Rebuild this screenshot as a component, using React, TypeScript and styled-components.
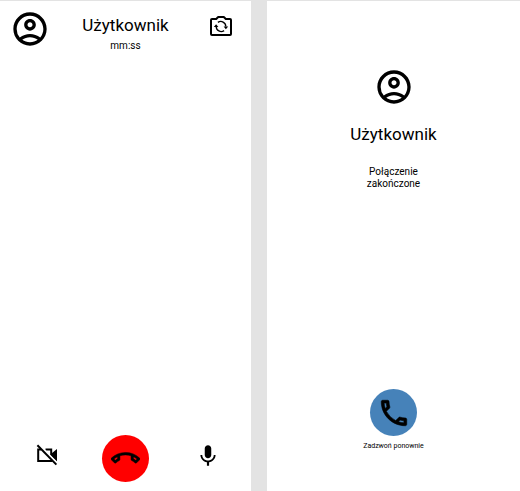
import React from "react";
import styled, { createGlobalStyle } from "styled-components";
import { MdOutlineAccountCircle, MdOutlineCallEnd, MdOutlineCall } from "react-icons/md";

const GlobalStyle = createGlobalStyle`
  *, *::before, *::after { box-sizing: border-box; }
  body {
    margin: 0;
    background: #e3e3e3;
    color: #000;
    font-family: Roboto, "Liberation Sans", sans-serif;
  }
`;

const Board = styled.main`
  display: grid;
  grid-template-columns: 251fr 253fr;
  gap: 16px;
  min-height: 100vh;
  padding-top: 1px;
`;

const Screen = styled.section`
  display: flex;
  flex-direction: column;
  background: #fff;
`;

const CallHeader = styled.header`
  display: grid;
  grid-template-columns: 1fr auto 1fr;
  align-items: start;
  padding: 8px 10px 0;
`;

const Avatar = styled.span`
  display: flex;
`;

const Caller = styled.div`
  padding-top: 4px;
  text-align: center;
`;

const Name = styled.h1`
  margin: 0;
  font-size: 17px;
  line-height: 24px;
  font-weight: 400;
`;

const Note = styled.p<{ $size?: number }>`
  margin: 0;
  font-size: ${({ $size = 10 }) => $size}px;
  line-height: 12px;
  text-align: center;
`;

const CallerNote = styled(Note)`
  margin-top: 3px;
`;

const IconButton = styled.button`
  display: flex;
  padding: 0;
  border: 0;
  background: none;
  color: inherit;
  cursor: pointer;
`;

const FlipButton = styled(IconButton)`
  justify-self: end;
  margin: 4px 8px 0 0;
`;

const RoundButton = styled(IconButton)<{ $color: string }>`
  align-items: center;
  justify-content: center;
  width: 47px;
  height: 47px;
  border-radius: 50%;
  background: ${({ $color }) => $color};

  path:not([fill="none"]) {
    stroke: currentColor;
    stroke-width: 0.4px;
  }
`;

const Controls = styled.footer`
  display: grid;
  grid-template-columns: 1fr auto 1fr;
  align-items: start;
  justify-items: center;
  margin-top: auto;
  padding-bottom: 9px;
`;

const ControlSlot = styled.div<{ $side: "left" | "right" }>`
  padding: ${({ $side }) => ($side === "left" ? "8px 9px 0 0" : "8px 0 0 16px")};
`;

const EndedBody = styled.div`
  display: flex;
  flex-direction: column;
  align-items: center;
  padding-top: 66px;
`;

const EndedName = styled(Name)`
  margin-top: 15px;
`;

const EndedNote = styled(Note)`
  width: 64px;
  margin-top: 20px;
`;

const Redial = styled.div`
  display: flex;
  flex-direction: column;
  align-items: center;
  gap: 4px;
  margin-top: auto;
  padding-bottom: 39px;
`;

function FlipCameraIcon() {
  return (
    <svg width="24" height="26" viewBox="0 0 24 26" fill="none" stroke="currentColor" aria-hidden="true">
      <path
        d="M3 6H7.2L9.2 4H14.8L16.8 6H21Q22 6 22 7V21Q22 22 21 22H3Q2 22 2 21V7Q2 6 3 6Z"
        strokeWidth="2"
        strokeLinejoin="round"
      />
      <path d="M8.9 9.4A5 5 0 0 1 16.8 13.5M15.1 17.6A5 5 0 0 1 7.2 13.5" strokeWidth="1.4" />
      <path d="M4.8 14H9.4L7.1 11.2ZM14.6 13.4H19.2L16.9 16.2Z" fill="currentColor" stroke="none" />
    </svg>
  );
}

function CameraOffIcon() {
  return (
    <svg width="24" height="24" viewBox="0 0 24 24" fill="none" stroke="currentColor" aria-hidden="true">
      <path d="M6 6.5H3.2V18H17.5M10.5 6.5H16.2V12" strokeWidth="2" />
      <path d="M15.5 11.2L22 6V18.5L15.5 12.5Z" fill="currentColor" stroke="none" />
      <path d="M3.8 1.2L23 20.8" stroke="#fff" strokeWidth="1.6" />
      <path d="M2.4 2.2L21.4 21.6" strokeWidth="2" />
    </svg>
  );
}

function MicIcon() {
  return (
    <svg width="26" height="26" viewBox="0 0 24 24" fill="currentColor" aria-hidden="true">
      <path d="M12 14c1.66 0 3-1.34 3-3V5c0-1.66-1.34-3-3-3S9 3.34 9 5v6c0 1.66 1.34 3 3 3zM17.3 11c0 3-2.54 5.1-5.3 5.1S6.7 14 6.7 11H5c0 3.41 2.72 6.23 6 6.72V21h2v-3.28c3.28-.48 6-3.3 6-6.72h-1.7z" />
    </svg>
  );
}

export default function App() {
  return (
    <>
      <GlobalStyle />
      <Board>
        <Screen>
          <CallHeader>
            <Avatar><MdOutlineAccountCircle size={40} /></Avatar>
            <Caller>
              <Name>Użytkownik</Name>
              <CallerNote>mm:ss</CallerNote>
            </Caller>
            <FlipButton type="button" aria-label="Przełącz kamerę">
              <FlipCameraIcon />
            </FlipButton>
          </CallHeader>
          <Controls>
            <ControlSlot $side="left">
              <IconButton type="button" aria-label="Wyłącz kamerę">
                <CameraOffIcon />
              </IconButton>
            </ControlSlot>
            <RoundButton type="button" $color="#ff0000" aria-label="Zakończ połączenie">
              <MdOutlineCallEnd size={29} />
            </RoundButton>
            <ControlSlot $side="right">
              <IconButton type="button" aria-label="Wycisz mikrofon">
                <MicIcon />
              </IconButton>
            </ControlSlot>
          </Controls>
        </Screen>
        <Screen>
          <EndedBody>
            <Avatar><MdOutlineAccountCircle size={40} /></Avatar>
            <EndedName>Użytkownik</EndedName>
            <EndedNote>Połączenie zakończone</EndedNote>
          </EndedBody>
          <Redial>
            <RoundButton type="button" $color="#4682b9" aria-labelledby="redial-label">
              <MdOutlineCall size={34} />
            </RoundButton>
            <Note id="redial-label" $size={7}>Zadzwoń ponownie</Note>
          </Redial>
        </Screen>
      </Board>
    </>
  );
}
